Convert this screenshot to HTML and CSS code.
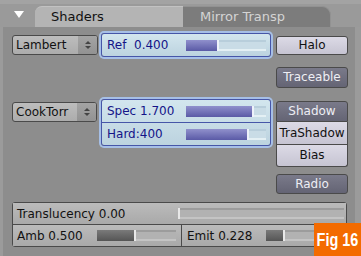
FILE: index.html
```html
<!DOCTYPE html>
<html>
<head>
<meta http-equiv="Content-Type" content="text/html; charset=utf-8">
<title>Shaders</title>
<link rel="stylesheet" href="styles.css">
</head>
<body>
<div id="window">
  <div class="header">
    <span class="tri"></span>
    <div class="tab active">Shaders</div>
    <div class="tab">Mirror Transp</div>
  </div>
  <div class="panel">
    <div class="grid">
      <div class="menu r1 c1"><span>Lambert</span><span class="arr"><i class="up"></i><i class="dn"></i></span></div>
      <div class="group r1 c2">
        <div class="num"><span class="lbl">Ref&nbsp;&nbsp;0.400</span><div class="track"><div class="fill" style="width:31px"></div></div></div>
      </div>
      <div class="btn light r1 c3 halo">Halo</div>

      <div class="btn dark r2 c3">Traceable</div>

      <div class="menu r3 c1 cook"><span>CookTorr</span><span class="arr"><i class="up"></i><i class="dn"></i></span></div>
      <div class="group r3 c2">
        <div class="num"><span class="lbl">Spec 1.700</span><div class="track"><div class="fill" style="width:66px"></div></div></div>
        <div class="num"><span class="lbl">Hard:400</span><div class="track"><div class="fill" style="width:61px"></div></div></div>
      </div>
      <div class="stack r3 c3">
        <div class="btn dark">Shadow</div>
        <div class="btn light tall">TraShadow</div>
        <div class="btn light">Bias</div>
      </div>

      <div class="btn dark r4 c3">Radio</div>
    </div>

    <div class="bottom">
      <div class="gnum wide"><span class="lbl">Translucency 0.00</span><div class="gtrack trans"><div class="gfill" style="width:0px"></div></div></div>
      <div class="pair">
        <div class="gnum"><span class="lbl">Amb 0.500</span><div class="gtrack amb"><div class="gfill" style="width:37px"></div></div></div>
        <div class="gnum"><span class="lbl">Emit 0.228</span><div class="gtrack emit"><div class="gfill" style="width:17px"></div></div></div>
      </div>
    </div>
  </div>
  <div class="badge"><span>Fig 16</span></div>
</div>
</body>
</html>
```

FILE: styles.css
```css
html, body { margin: 0; padding: 0; }
body {
  width: 361px;
  height: 256px;
  overflow: hidden;
  background-color: #959595;
  font-family: "DejaVu Sans", sans-serif;
  font-size: 12px;
}
#window { position: relative; width: 361px; height: 256px; overflow: hidden; }

/* header with tabs */
.header {
  height: 27px;
  display: flex;
  align-items: flex-end;
  padding-left: 14px;
  background-color: #9a9a9a;
  border-top: 4px solid #a3a3a3;
  box-sizing: border-box;
}
.tri {
  align-self: flex-start;
  margin-top: 7px;
  width: 0; height: 0;
  border-left: 5.5px solid transparent;
  border-right: 5.5px solid transparent;
  border-top: 7px solid #ffffff;
}
.tab {
  width: 148px;
  height: 21px;
  box-sizing: border-box;
  line-height: 20px;
  font-size: 13px;
}
.tab.active {
  margin-left: 11px;
  padding-left: 16px;
  background-color: #b4b4b4;
  border-top-left-radius: 7px;
  color: #111;
  border-top: 1px solid #c2c2c2;
}
.tab + .tab {
  padding-left: 17px;
  background-color: #7c7c7c;
  border-top-right-radius: 9px;
  border-top: 1px solid #929292;
  border-right: 1px solid #929292;
  color: #d4d4d4;
}

/* main panel */
.panel {
  height: 229px;
  background-color: #8d8d8d;
  border-left: 3px solid #9b9b9b;
  border-right: 6px solid #9b9b9b;
  box-sizing: border-box;
  padding-left: 9px;
  padding-top: 6px;
}
.grid {
  display: grid;
  grid-template-columns: 89px 175px 73px;
  grid-template-rows: 34px 32px 75px 28px;
}
.r1 { grid-row: 1; } .r2 { grid-row: 2; } .r3 { grid-row: 3; } .r4 { grid-row: 4; }
.c1 { grid-column: 1; } .c2 { grid-column: 2; } .c3 { grid-column: 3; }
.grid > * { align-self: start; box-sizing: border-box; }

.menu {
  width: 86px;
  height: 20px;
  margin-top: 2px;
  display: flex;
  justify-content: space-between;
  border: 1px solid #4a4a4a;
  border-radius: 3px;
  background: linear-gradient(#bdbdbd, #acacac);
  color: #111;
  line-height: 18px;
  padding-left: 3px;
  overflow: hidden;
}
.menu.cook { margin-top: 3px; width: 85px; }
.arr {
  width: 19px;
  background: linear-gradient(#a4a4a4, #929292);
  display: flex;
  flex-direction: column;
  align-items: center;
  justify-content: center;
  gap: 2px;
}
.arr i { display: block; width: 0; height: 0; border-left: 3px solid transparent; border-right: 3px solid transparent; }
.arr .up { border-bottom: 3px solid #444; }
.arr .dn { border-top: 3px solid #444; }

/* highlighted blue number group */
.group {
  width: 170px;
  border: 1px solid #4656a8;
  border-radius: 3px;
  box-shadow: 0 0 0 2px #a6bfe6;
  background: linear-gradient(#d3e6ee, #bcd3df);
}
.num {
  height: 22px;
  display: flex;
  align-items: center;
  color: #141488;
  padding-left: 5px;
}
.num + .num { border-top: 1px solid #4656a8; }
.num .lbl { width: 79px; white-space: pre; }
.track {
  position: relative;
  width: 80px;
  height: 11px;
  border-top: 2px solid #b8cedb;
  border-bottom: 2px solid #e4f0f4;
  box-sizing: border-box;
  background: #c9dce6;
}
.track .fill {
  position: absolute;
  left: 0; top: -2px;
  height: 11px;
  background: linear-gradient(#9090cc, #5a5aa6);
  border-right: 2px solid #eef2fa;
}

/* toggle buttons */
.btn {
  width: 72px;
  height: 21px;
  border: 1px solid #4a4a4a;
  border-radius: 3px;
  text-align: center;
  line-height: 19px;
  box-sizing: border-box;
}
.btn.light { background: linear-gradient(#dcdae6, #c6c4d2); color: #111; }
.btn.dark { background: linear-gradient(#7a7a8a, #646474); color: #eeeef4; }
.halo { margin-top: 3px; height: 19px; line-height: 17px; }
.r4 { height: 20px; line-height: 18px; }
.stack { margin-top: 2px; }
.stack .btn { border-radius: 0; }
.stack .btn:first-child { border-radius: 3px 3px 0 0; }
.stack .btn:last-child { border-radius: 0 0 3px 3px; height: 22px; line-height: 20px; }
.stack .btn + .btn { border-top: 0; }
.stack .tall { height: 23px; line-height: 22px; }

/* grey sliders */
.bottom {
  width: 335px;
  border: 1px solid #4a4a4a;
  border-radius: 3px;
  box-sizing: border-box;
}
.pair { display: flex; border-top: 1px solid #4a4a4a; }
.gnum {
  height: 21px;
  display: flex;
  align-items: center;
  padding-left: 4px;
  background: linear-gradient(#bbbbbb, #a9a9a9);
  color: #111;
  box-sizing: border-box;
}
.pair .gnum { width: 168px; }
.pair .gnum + .gnum { width: 165px; border-left: 1px solid #4a4a4a; padding-left: 5px; }
.gnum .lbl { white-space: pre; }
.gtrack {
  position: relative;
  height: 11px;
  border-top: 2px solid #9c9c9c;
  border-bottom: 2px solid #c4c4c4;
  box-sizing: border-box;
  background: #b2b2b2;
}
.gtrack .gfill {
  position: absolute;
  left: 0; top: -2px;
  height: 11px;
  background: linear-gradient(#7a7a7a, #555555);
  border-right: 2px solid #e8e8e8;
}
.trans { margin-left: 53px; width: 166px; }
.amb { margin-left: 14px; width: 79px; }
.emit { margin-left: 14px; width: 80px; }

.badge {
  position: absolute;
  right: 0;
  bottom: 0;
  width: 47px;
  height: 33px;
  display: flex;
  justify-content: center;
  align-items: center;
  background-color: #f36b00;
  color: #ffffff;
  font-family: "Liberation Sans", "DejaVu Sans", sans-serif;
  font-weight: bold;
  font-size: 19px;
  white-space: nowrap;
}
.badge span { flex: none; transform: scaleX(0.76); }
```
